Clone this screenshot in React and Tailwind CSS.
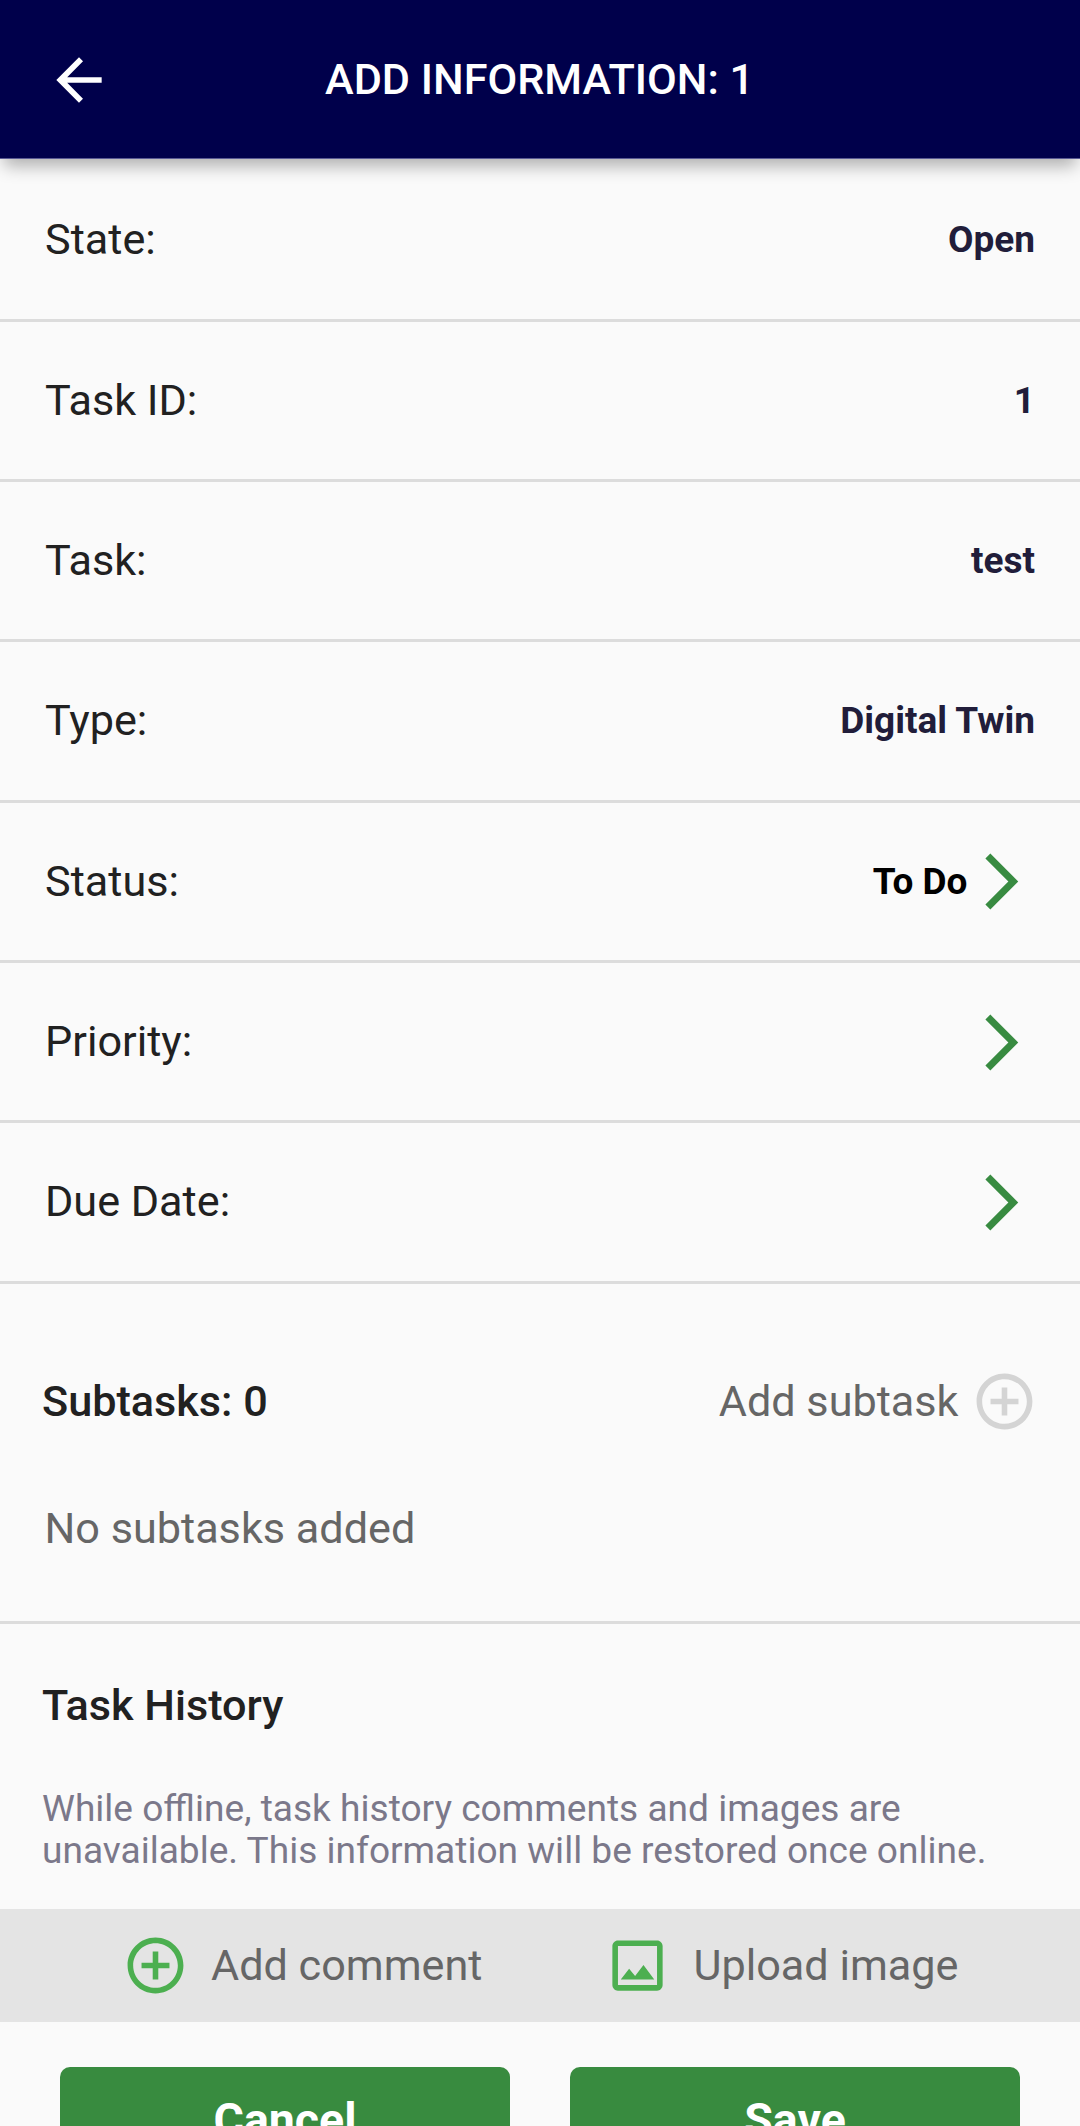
import { MdAddCircleOutline, MdArrowBack, MdOutlineImage } from "react-icons/md";

const details = [
  { label: "State:", value: "Open" },
  { label: "Task ID:", value: "1" },
  { label: "Task:", value: "test" },
  { label: "Type:", value: "Digital Twin" },
];

const editableDetails = [
  { label: "Status:", value: "To Do" },
  { label: "Priority:", value: "" },
  { label: "Due Date:", value: "" },
];

function ForwardIcon() {
  return (
    <svg className="size-[67px]" fill="currentColor" viewBox="0 0 24 24">
      <path d="M6.23 20.23 8 22l10-10L8 2 6.23 3.77 14.46 12z" />
    </svg>
  );
}

function DetailRow({ label, children }) {
  return (
    <div className="flex h-[160.33px] items-center justify-between border-b-[3px] border-[#dcdcdc] px-[45px]">
      <span className="text-[43.2px]">{label}</span>
      {children}
    </div>
  );
}

export default function App() {
  return (
    <div className="flex h-[2126px] w-full flex-col overflow-hidden bg-[#fafafa] font-['Roboto',sans-serif] leading-none text-[#212121]">
      <header className="relative flex h-[159px] shrink-0 items-center border-b border-[#5a5a94] bg-[#00004b] pt-[2px] text-white shadow-[0_11px_16px_-4px_rgba(0,0,0,0.3)]">
        <button className="ml-[45px] flex w-[68px]" type="button">
          <MdArrowBack className="size-[68px]" />
        </button>
        <h1 className="ml-[212px] text-[43.2px] font-medium">ADD INFORMATION: 1</h1>
      </header>

      <section className="mt-[2.34px] shrink-0">
        {details.map((item) => (
          <DetailRow key={item.label} label={item.label}>
            <span className="text-[37px] font-bold text-[#211d3a]">{item.value}</span>
          </DetailRow>
        ))}
        {editableDetails.map((item) => (
          <DetailRow key={item.label} label={item.label}>
            <button className="flex items-center pt-px text-[37px] font-bold text-black" type="button">
              <span>{item.value}</span>
              <span className="mr-[0.5px] text-[#388b41]">
                <ForwardIcon />
              </span>
            </button>
          </DetailRow>
        ))}
      </section>

      <section className="h-[340px] shrink-0 border-b-[3px] border-[#dcdcdc] pt-[84px]">
        <div className="flex h-[68px] items-center justify-between pr-[42.5px] pl-[42px]">
          <h2 className="text-[43.2px] font-medium">Subtasks: 0</h2>
          <button className="flex items-center gap-3 text-[43.2px] text-[#666]" type="button">
            <span>Add subtask</span>
            <MdAddCircleOutline className="size-[67px] text-[#d4d4d4]" />
          </button>
        </div>
        <p className="mt-[71px] pl-[44.5px] text-[43.2px] text-[#666]">No subtasks added</p>
      </section>

      <section className="h-[285px] shrink-0 px-[42px] pt-[60px]">
        <h2 className="text-[43.2px] font-medium">Task History</h2>
        <p className="mt-[61px] text-[37.1px] leading-[42px] text-[#7b788a]">
          While offline, task history comments and images are
          <br />
          unavailable. This information will be restored once online.
        </p>
      </section>

      <div className="flex h-[113px] shrink-0 items-center bg-[#e4e4e4] text-[43.2px] text-[#666]">
        <button className="ml-[122px] flex items-center gap-[22px]" type="button">
          <MdAddCircleOutline className="size-[67px] text-[#4caf50]" />
          <span className="pt-px">Add comment</span>
        </button>
        <button className="ml-[122px] flex items-center gap-[22px]" type="button">
          <MdOutlineImage className="size-[67px] text-[#4caf50]" />
          <span className="pt-px">Upload image</span>
        </button>
      </div>

      <footer className="mt-[45px] flex shrink-0 gap-[60px] px-[60px] text-[46.5px] font-bold text-white">
        <button className="h-[107px] flex-1 rounded-[10px] bg-[#388b3f]" type="button">
          Cancel
        </button>
        <button className="h-[107px] flex-1 rounded-[10px] bg-[#388b3f]" type="button">
          Save
        </button>
      </footer>
    </div>
  );
}
